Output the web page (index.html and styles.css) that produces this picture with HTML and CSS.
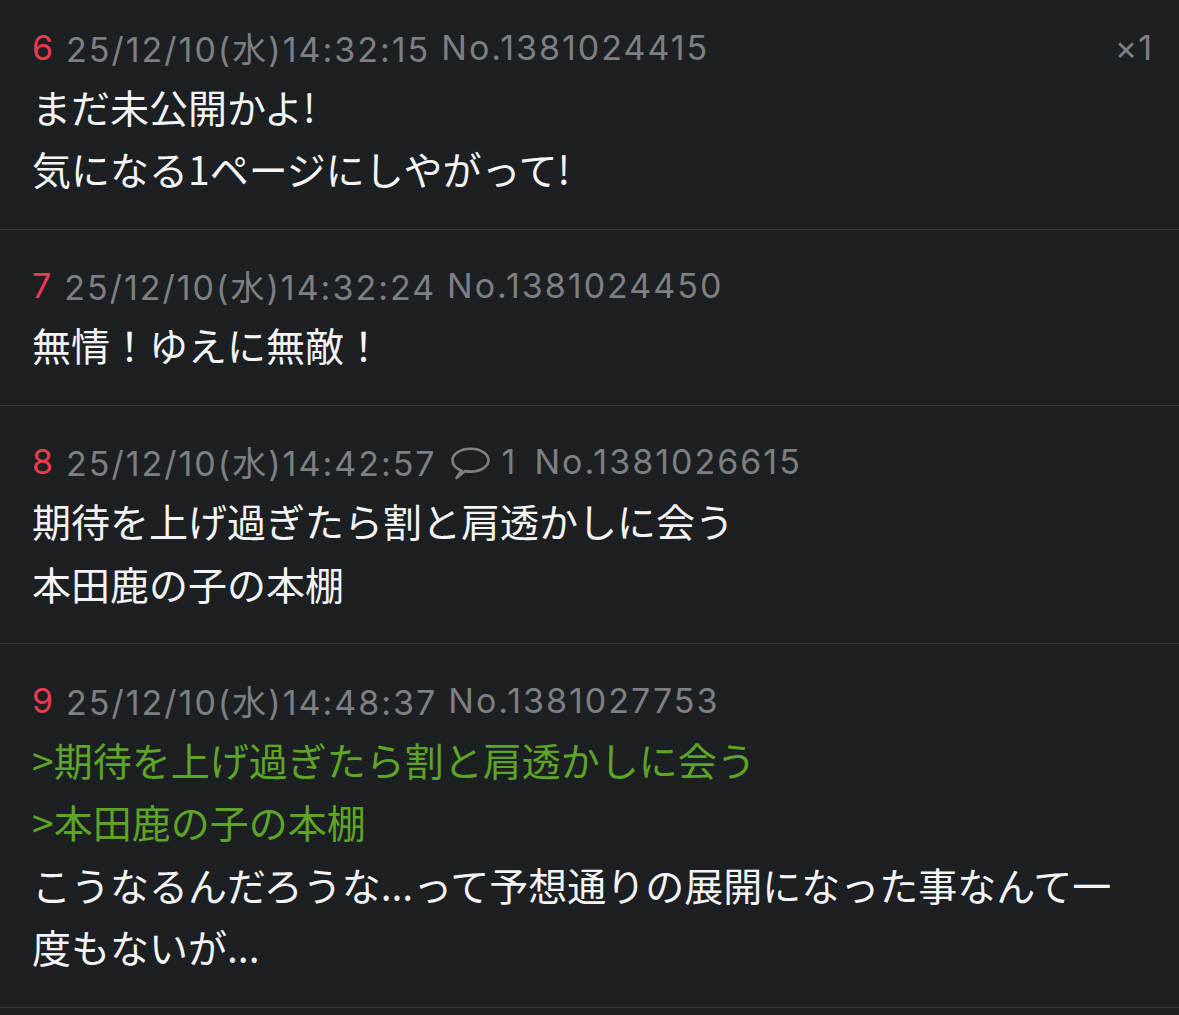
FILE: index.html
```html
<!DOCTYPE html>
<html lang="ja">
<head>
<meta charset="utf-8">
<title>スレッド</title>
<link rel="stylesheet" href="styles.css">
</head>
<body>
<main class="thread">
  <article class="post post-first">
    <header class="meta">
      <span class="num">6</span>
      <span class="date">25/12/10(水)14:32:15</span>
      <span class="id">No.1381024415</span>
      <span class="count">×1</span>
    </header>
    <div class="body">
      <p>まだ未公開かよ!</p>
      <p>気になる1ページにしやがって!</p>
    </div>
  </article>
  <article class="post">
    <header class="meta">
      <span class="num">7</span>
      <span class="date">25/12/10(水)14:32:24</span>
      <span class="id">No.1381024450</span>
    </header>
    <div class="body">
      <p>無情！ゆえに無敵！</p>
    </div>
  </article>
  <article class="post">
    <header class="meta">
      <span class="num">8</span>
      <span class="date">25/12/10(水)14:42:57</span>
      <span class="replies">
        <svg class="bubble" viewBox="0 0 40 34" width="40" height="34" aria-hidden="true">
          <path d="M11.5 23.5 C6 21.4 2.5 17.6 2.5 13.2 C2.5 6.8 10.6 1.8 20.5 1.8 C30.4 1.8 38.5 6.8 38.5 13.2 C38.5 19.6 30.4 24.6 20.5 24.6 C18.7 24.6 16.9 24.4 15.2 24.1 L6.5 31 Z" fill="none" stroke="#7e7f81" stroke-width="2.6" stroke-linejoin="round"/>
        </svg>
        <span class="reply-count">1</span>
      </span>
      <span class="id">No.1381026615</span>
    </header>
    <div class="body">
      <p>期待を上げ過ぎたら割と肩透かしに会う</p>
      <p>本田鹿の子の本棚</p>
    </div>
  </article>
  <article class="post">
    <header class="meta">
      <span class="num">9</span>
      <span class="date">25/12/10(水)14:48:37</span>
      <span class="id">No.1381027753</span>
    </header>
    <div class="body">
      <p class="quote">&gt;期待を上げ過ぎたら割と肩透かしに会う</p>
      <p class="quote">&gt;本田鹿の子の本棚</p>
      <p>こうなるんだろうな...って予想通りの展開になった事なんて一度もないが...</p>
    </div>
  </article>
</main>
</body>
</html>
```

FILE: styles.css
```css
html, body {
  margin: 0;
  padding: 0;
  background: #1d2023;
}

.thread {
  display: flex;
  flex-direction: column;
}

.post {
  padding: 25px 26px 29px 32px;
  border-bottom: 1px solid #373a3d;
}

.post-first {
  padding-top: 16px;
}

.meta {
  display: flex;
  align-items: center;
  gap: 11px;
  height: 62.5px;
  font-family: Inter, "Noto Sans CJK JP", sans-serif;
  font-size: 34px;
  letter-spacing: 2px;
  color: #7e7f81;
  white-space: nowrap;
}

.num {
  color: #ee3a50;
}

.replies {
  display: flex;
  align-items: center;
  gap: 12px;
  margin-left: 2px;
  margin-right: 6px;
}

.bubble {
  display: block;
  margin-top: 4px;
}

.count {
  margin-left: auto;
  letter-spacing: 1px;
}

.body {
  margin-top: -4px;
  padding-right: 6px;
  font-family: "Noto Sans CJK JP", sans-serif;
  font-size: 39px;
  line-height: 62.5px;
  color: #f4f4f4;
}

.body p {
  margin: 0;
}

.quote {
  color: #5da427;
}
```
